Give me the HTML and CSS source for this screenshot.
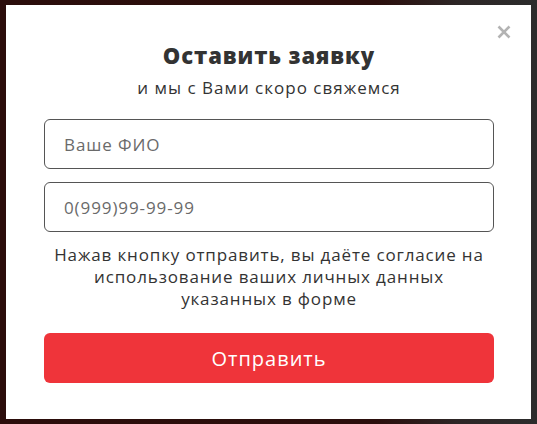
FILE: index.html
```html
<!DOCTYPE html>
<html lang="ru">
<head>
<meta charset="utf-8">
<title>Оставить заявку</title>
<link rel="stylesheet" href="styles.css">
</head>
<body>
<div class="overlay">
  <div class="modal">
    <button class="close" aria-label="Закрыть">
      <svg width="14" height="14" viewBox="0 0 14 14"><path d="M1.5 1.5 L12.5 12.5 M12.5 1.5 L1.5 12.5" stroke="#b3b3b3" stroke-width="2.6" fill="none"/></svg>
    </button>
    <h2 class="title">Оставить заявку</h2>
    <p class="subtitle">и мы с Вами скоро свяжемся</p>
    <form class="form">
      <input class="field" type="text" placeholder="Ваше ФИО">
      <input class="field" type="tel" placeholder="0(999)99-99-99">
      <p class="note">Нажав кнопку отправить, вы даёте согласие на использование ваших личных данных указанных в форме</p>
      <button class="submit" type="button">Отправить</button>
    </form>
  </div>
</div>
</body>
</html>
```
FILE: styles.css
```css
* { box-sizing: border-box; }
html, body { margin: 0; padding: 0; }
body {
  background: linear-gradient(90deg, #2b0d0b 0%, #2b0e0c 70%, #2d2626 85%, #2c2c2c 100%);
  font-family: "Open Sans", "Noto Sans", sans-serif;
  height: 424px;
  overflow: hidden;
}
.overlay {
  padding: 5px 6px 5px 6px;
}
.modal {
  position: relative;
  width: 525px;
  height: 414px;
  background: #fff;
  padding: 38px 37px 0 38px;
  text-align: center;
}
.close {
  position: absolute;
  top: 20px;
  right: 20px;
  width: 14px;
  height: 14px;
  padding: 0;
  border: 0;
  background: none;
  cursor: pointer;
  display: flex;
}
.title {
  margin: 0;
  font-size: 22px;
  line-height: 24px;
  font-weight: 800;
  letter-spacing: 0.9px;
  color: #333;
}
.subtitle {
  margin: 10px 0 0;
  font-size: 17px;
  line-height: 22px;
  letter-spacing: 1px;
  color: #333;
}
.form {
  margin-top: 20px;
  display: flex;
  flex-direction: column;
}
.field {
  height: 50px;
  border: 1px solid #555;
  border-radius: 6px;
  padding: 0 19px;
  font-family: inherit;
  font-size: 17px;
  letter-spacing: 0.9px;
  color: #333;
  outline: none;
}
.field + .field { margin-top: 13px; }
.field::placeholder { color: #6a6a6a; }
.note {
  margin: 12px 0 0;
  font-size: 17px;
  line-height: 22px;
  letter-spacing: 0.85px;
  color: #333;
}
.submit {
  margin-top: 23px;
  height: 50px;
  border: 0;
  border-radius: 6px;
  background: #ef343a;
  color: #fff;
  font-family: inherit;
  font-size: 20px;
  letter-spacing: 1px;
}
```
